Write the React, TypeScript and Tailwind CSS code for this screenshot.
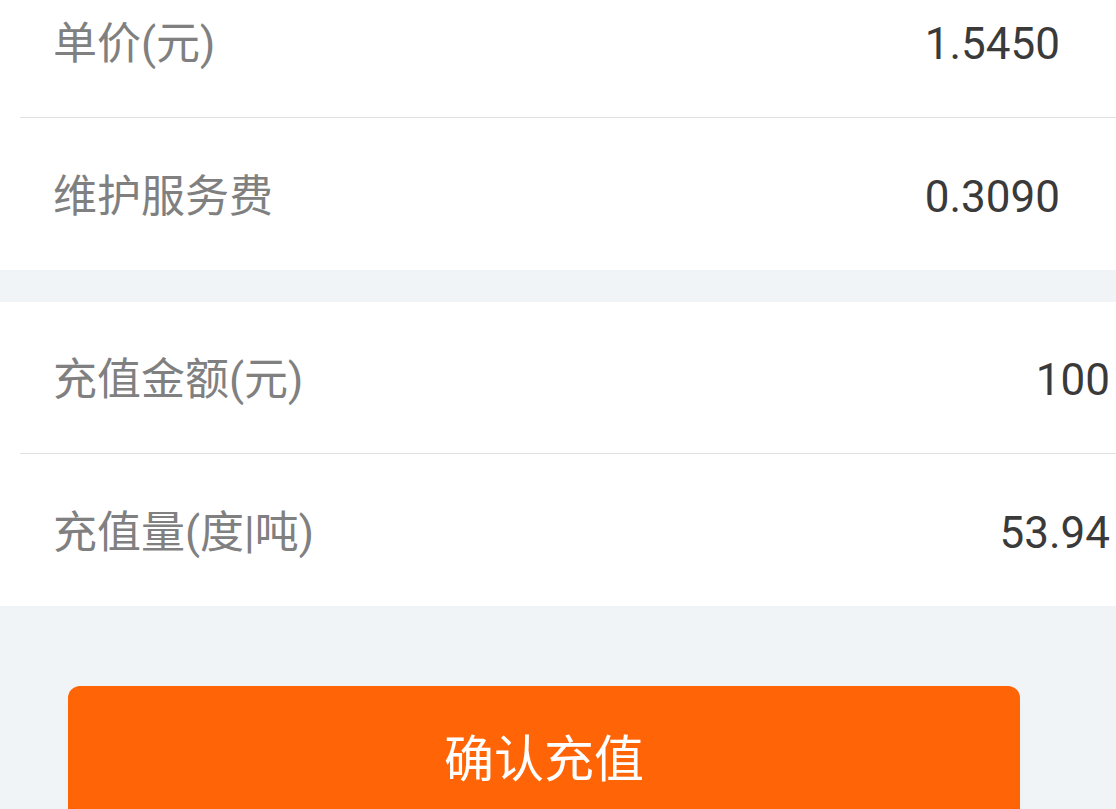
import React from 'react';

type Row = { label: string; value: string };

const feeRows: Row[] = [
  { label: '单价(元)', value: '1.5450' },
  { label: '维护服务费', value: '0.3090' },
];

const rechargeRows: Row[] = [
  { label: '充值金额(元)', value: '100' },
  { label: '充值量(度|吨)', value: '53.94' },
];

function InfoRow({ row, last, valuePad }: { row: Row; last: boolean; valuePad: string }) {
  return (
    <div className={`ml-[20px] flex h-[152px] items-center justify-between pt-[5px] ${last ? '' : 'border-b border-[#e2e2e2]'}`}>
      <span className="pl-[33px] text-[44px] leading-none text-[#808080]">{row.label}</span>
      <span className={`${valuePad} text-[44px] leading-none text-[#3a3a3a]`}>{row.value}</span>
    </div>
  );
}

export default function App() {
  return (
    <div
      className="h-[809px] w-[1116px] overflow-hidden bg-[#f1f4f7]"
      style={{ fontFamily: "Roboto, 'Noto Sans CJK SC', sans-serif" }}
    >
      {/* fee info */}
      <div className="-mt-[34px] bg-white">
        {feeRows.map((r, i) => (
          <InfoRow key={r.label} row={r} last={i === feeRows.length - 1} valuePad="pr-[56px]" />
        ))}
      </div>

      {/* recharge info */}
      <div className="mt-[32px] bg-white">
        {rechargeRows.map((r, i) => (
          <InfoRow key={r.label} row={r} last={i === rechargeRows.length - 1} valuePad="pr-[6px]" />
        ))}
      </div>

      {/* Submit */}
      <div className="px-[68px] pt-[80px]">
        <button
          type="button"
          className="flex h-[148px] w-[952px] items-center justify-center rounded-[12px] bg-[#ff6406] text-[50px] text-white"
        >
          确认充值
        </button>
      </div>
    </div>
  );
}
